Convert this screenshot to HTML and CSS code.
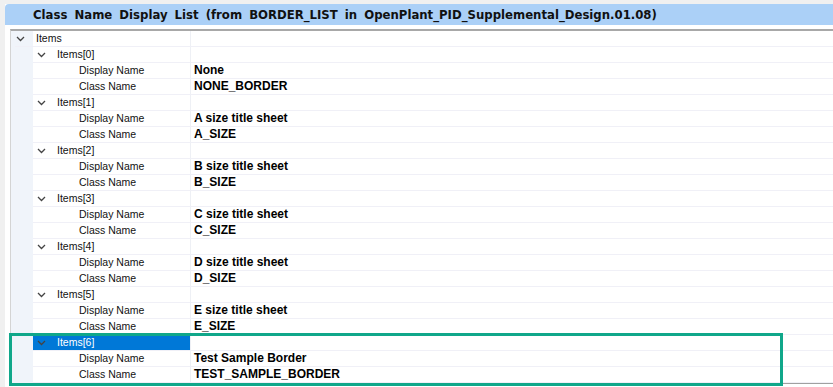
FILE: index.html
```html
<!DOCTYPE html>
<html lang="en">
<head>
  <meta charset="UTF-8" />
  <title>Class Name Display List</title>
  <link rel="stylesheet" href="styles.css">
</head>
<body>

  <div class="window">
    <div class="title">Class Name Display List (from BORDER_LIST in OpenPlant_PID_Supplemental_Design.01.08)</div>

    <div class="grid" id="grid">
      <div class="row">
        <div class="gutter"></div>
        <div class="name lvl0"><span class="chev"></span>Items</div>
        <div class="value"></div>
      </div>
    </div>
  </div>

  <script>
    const items = [
      ['None', 'NONE_BORDER'],
      ['A size title sheet', 'A_SIZE'],
      ['B size title sheet', 'B_SIZE'],
      ['C size title sheet', 'C_SIZE'],
      ['D size title sheet', 'D_SIZE'],
      ['E size title sheet', 'E_SIZE'],
      ['Test Sample Border', 'TEST_SAMPLE_BORDER']
    ];

    const chevron = '<svg class="chev" width="9" height="6" viewBox="0 0 9 6"><polyline points="1,1 4.5,4.5 8,1" fill="none" stroke="#444" stroke-width="1.3"/></svg>';
    const grid = document.getElementById('grid');
    grid.querySelector('.chev').outerHTML = chevron;

    const row = (nameClass, name, value) => `
      <div class="row">
        <div class="gutter"></div>
        <div class="name ${nameClass}">${name}</div>
        <div class="value">${value}</div>
      </div>`;

    items.forEach(([display, cls], i) => {
      const last = i === items.length - 1;
      const group = document.createElement('div');
      group.className = last ? 'group marked' : 'group';
      group.innerHTML =
        row(last ? 'lvl1 selected' : 'lvl1', chevron + `Items[${i}]`, '') +
        row('lvl2', 'Display Name', display) +
        row('lvl2', 'Class Name', cls);
      grid.appendChild(group);
    });
  </script>

</body>
</html>
```

FILE: styles.css
```css
* {
  margin: 0;
  padding: 0;
  box-sizing: border-box;
}

body {
  background: #f0f0f0;
  font-family: 'Liberation Sans', Arial, sans-serif;
  color: #000;
  overflow: hidden;
}

.window {
  margin: 4px 0 0 5px;
  background: #fff;
  height: 383px;
}

.title {
  height: 21px;
  line-height: 22px;
  padding-left: 28px;
  background: #abd0f7;
  border-top-left-radius: 4px;
  font-family: 'DejaVu Sans Condensed', 'DejaVu Sans', sans-serif;
  font-weight: bold;
  font-size: 13px;
  word-spacing: 3px;
  color: #111;
  white-space: nowrap;
  overflow: hidden;
}

.grid {
  margin: 4px 0 0 5px;
  border-top: 2px solid #a8a8a8;
  border-left: 1px solid #d4d4d4;
  border-bottom: 1px solid #a0a0a0;
}

.row {
  display: grid;
  grid-template-columns: 22px 158px 1fr;
  height: 16px;
  font-size: 10.5px;
  line-height: 15px;
  white-space: nowrap;
}

.gutter {
  background: #f0f4fa;
}

.name,
.value {
  border-bottom: 1px solid #f0f0f7;
  display: flex;
  align-items: center;
}

.name {
  border-right: 1px solid #eef0f5;
  color: #111;
}

.value {
  padding-left: 3px;
  font-size: 12px;
  font-weight: bold;
}

.chev {
  flex: none;
  margin-right: 11px;
}

.lvl0 {
  margin-left: -18px;
}

.lvl0 .chev {
  margin-left: 1px;
}

.lvl1 {
  padding-left: 4px;
}

.lvl2 {
  padding-left: 46px;
}

.selected {
  background: #0078d7;
  color: #fff;
}

.group {
  position: relative;
}

.marked::after {
  content: '';
  position: absolute;
  left: -2px;
  top: -2px;
  right: 50px;
  bottom: -3px;
  border: 3px solid #10a78a;
  pointer-events: none;
}
```
